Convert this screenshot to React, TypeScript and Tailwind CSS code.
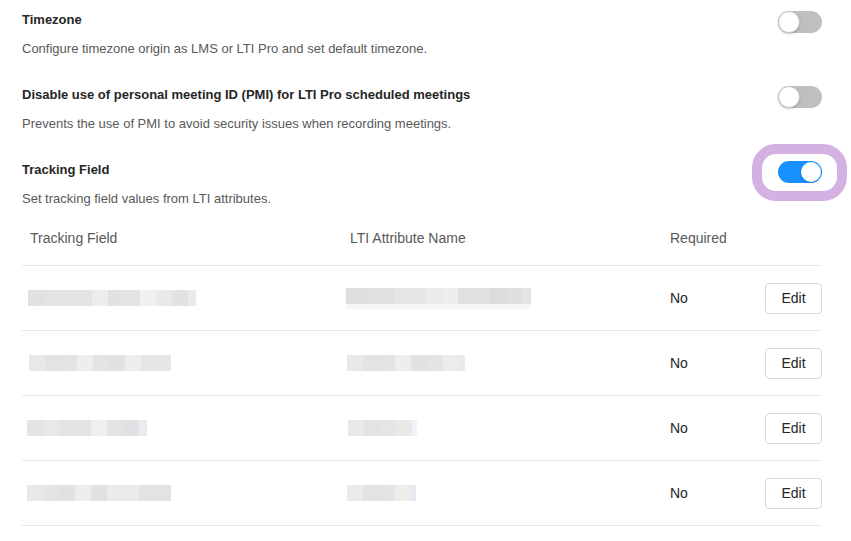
import React from "react";

type Setting = {
  title: string;
  desc: string;
  on: boolean;
  highlight?: boolean;
};

const settings: Setting[] = [
  {
    title: "Timezone",
    desc: "Configure timezone origin as LMS or LTI Pro and set default timezone.",
    on: false,
  },
  {
    title: "Disable use of personal meeting ID (PMI) for LTI Pro scheduled meetings",
    desc: "Prevents the use of PMI to avoid security issues when recording meetings.",
    on: false,
  },
  {
    title: "Tracking Field",
    desc: "Set tracking field values from LTI attributes.",
    on: true,
    highlight: true,
  },
];

// blurred placeholder values, one entry per pixel block
type Row = { field: string[]; fieldOffset: string; attr: string[]; attrOffset: string; attrStrip?: boolean };

const rows: Row[] = [
  {
    field: [
      "w-4 bg-[#e1e1e3]", "w-4 bg-[#e3e3e3]", "w-4 bg-[#e3e3e3]", "w-4 bg-[#e4e4e4]",
      "w-4 bg-[#ececec]", "w-4 bg-[#e2e2e2]", "w-4 bg-[#e3e3e3]",
      "w-4 bg-[#f0f0f0]", "w-4 bg-[#e9e9e9]", "w-4 bg-[#e2e2e2]", "w-2 bg-[#eaeaec]",
    ],
    fieldOffset: "ml-[-2px]",
    attr: [
      "w-4 bg-[#dfdfe0]", "w-4 bg-[#e0e0e2]", "w-4 bg-[#e0e0e2]", "w-4 bg-[#e6e6e6]",
      "w-4 bg-[#e7e7e7]", "w-4 bg-[#ebebeb]", "w-4 bg-[#eeeef0]", "w-4 bg-[#e0e0e2]",
      "w-4 bg-[#e0e0e2]", "w-4 bg-[#dcdcdc]", "w-4 bg-[#dfdfdf]", "w-[9px] bg-[#e4e4e8]",
    ],
    attrOffset: "ml-[-4px]",
    attrStrip: true,
  },
  {
    field: [
      "w-4 bg-[#e8e8e8]", "w-4 bg-[#e3e3e5]", "w-4 bg-[#e4e4e4]", "w-4 bg-[#eeeeee]",
      "w-4 bg-[#e4e4e6]", "w-4 bg-[#e2e2e2]", "w-4 bg-[#eeeeee]", "w-4 bg-[#e6e6e6]",
      "w-[14px] bg-[#e6e6e8]",
    ],
    fieldOffset: "ml-[-1px]",
    attr: [
      "w-4 bg-[#e8e8e8]", "w-4 bg-[#e3e3e5]", "w-4 bg-[#e4e4e4]", "w-4 bg-[#eeeeee]",
      "w-4 bg-[#e2e2e4]", "w-4 bg-[#e4e4e4]", "w-4 bg-[#ececec]", "w-[6px] bg-[#eaeaec]",
    ],
    attrOffset: "ml-[-3px]",
  },
  {
    field: [
      "w-4 bg-[#e4e4e4]", "w-4 bg-[#e8e8ea]", "w-4 bg-[#e3e4e3]", "w-4 bg-[#e3e3e5]",
      "w-4 bg-[#f0f0f0]", "w-4 bg-[#e4e4e4]", "w-4 bg-[#e1e1e5]", "w-2 bg-[#ebebed]",
    ],
    fieldOffset: "ml-[-3px]",
    attr: [
      "w-4 bg-[#e9e9e9]", "w-4 bg-[#e3e3e3]", "w-4 bg-[#e5e5e7]", "w-4 bg-[#ebe9e7]",
      "w-[5px] bg-[#f0f4fa]",
    ],
    attrOffset: "ml-[-2px]",
  },
  {
    field: [
      "w-4 bg-[#e8e8e8]", "w-4 bg-[#e4e4e4]", "w-4 bg-[#e1e1e3]", "w-4 bg-[#ededed]",
      "w-4 bg-[#e1e1e1]", "w-4 bg-[#ebebeb]", "w-4 bg-[#ebebeb]", "w-4 bg-[#e3e3e3]",
      "w-4 bg-[#e3e3e5]",
    ],
    fieldOffset: "ml-[-3px]",
    attr: [
      "w-4 bg-[#ebebeb]", "w-4 bg-[#e3e3e5]", "w-4 bg-[#e4e4e6]", "w-4 bg-[#eeedeb]",
      "w-[5px] bg-[#e6e8f2]",
    ],
    attrOffset: "ml-[-3px]",
  },
];

function Toggle({ on, highlight }: { on: boolean; highlight?: boolean }) {
  return (
    <div className="relative mt-[1px] shrink-0">
      {highlight && (
        <div className="absolute left-[-26px] top-[-17px] h-[57px] w-[95px] rounded-[24px] border-[10px] border-[#d3b1e3]" />
      )}
      <div
        className={
          on
            ? "relative h-[22px] w-[44px] rounded-full bg-[#1890ff]"
            : "relative h-[22px] w-[44px] rounded-full bg-[#bfbfbf]"
        }
      >
        <div
          className={
            on
              ? "absolute right-[1px] top-[1px] h-[20px] w-[20px] rounded-full bg-white shadow-[0_1px_2px_rgba(0,35,11,0.2)]"
              : "absolute left-0 top-0 h-[22px] w-[22px] rounded-full border border-[#c8c8c8] bg-white shadow-[0_1px_2px_rgba(0,0,0,0.2)]"
          }
        />
      </div>
    </div>
  );
}

function Blur({ blocks, offset, strip }: { blocks: string[]; offset: string; strip?: boolean }) {
  return (
    <div className={`flex flex-col ${offset}`}>
      <div className="flex h-4">
        {blocks.map((b, i) => (
          <div key={i} className={`h-4 ${b}`} />
        ))}
      </div>
      {strip && <div className="h-[5px] w-[185px] bg-[#f6f6f6]" />}
    </div>
  );
}

export default function App() {
  return (
    <div
      className="min-h-[541px] w-[851px] bg-white"
      style={{ fontFamily: '"Liberation Sans", Arial, sans-serif' }}
    >
      <div className="w-[822px] pl-[22px] pt-[10px]">
        <div className="flex flex-col gap-[26px]">
          {settings.map((s) => (
            <div key={s.title} className="flex flex-col">
              <div className="flex h-[20px] items-start justify-between">
                <div className="text-[13px] font-bold leading-[20px] text-[#262626]">{s.title}</div>
                <Toggle on={s.on} highlight={s.highlight} />
              </div>
              <div className="mt-[9px] text-[13px] leading-[20px] text-[#595959]">{s.desc}</div>
            </div>
          ))}
        </div>

        <div className="mt-[17px]">
          <div className="grid grid-cols-[320px_320px_1fr] border-b border-[#e8e8e8] pb-[15px] text-[14px] leading-[24px] text-[#595959]">
            <div className="px-2">Tracking Field</div>
            <div className="px-2">LTI Attribute Name</div>
            <div className="px-2">Required</div>
          </div>
          {rows.map((r, i) => (
            <div
              key={i}
              className="grid h-[65px] grid-cols-[320px_320px_1fr] items-center border-b border-[#e8e8e8] text-[14px] text-[#262626]"
            >
              <div className="flex px-2">
                <Blur blocks={r.field} offset={r.fieldOffset} />
              </div>
              <div className="flex px-2">
                <Blur blocks={r.attr} offset={r.attrOffset} strip={r.attrStrip} />
              </div>
              <div className="flex items-center justify-between pl-2">
                <span>No</span>
                <button className="h-[31px] w-[57px] rounded-[4px] border border-[#d9d9d9] bg-white text-[14px] text-[#262626]">
                  Edit
                </button>
              </div>
            </div>
          ))}
        </div>
      </div>
    </div>
  );
}
